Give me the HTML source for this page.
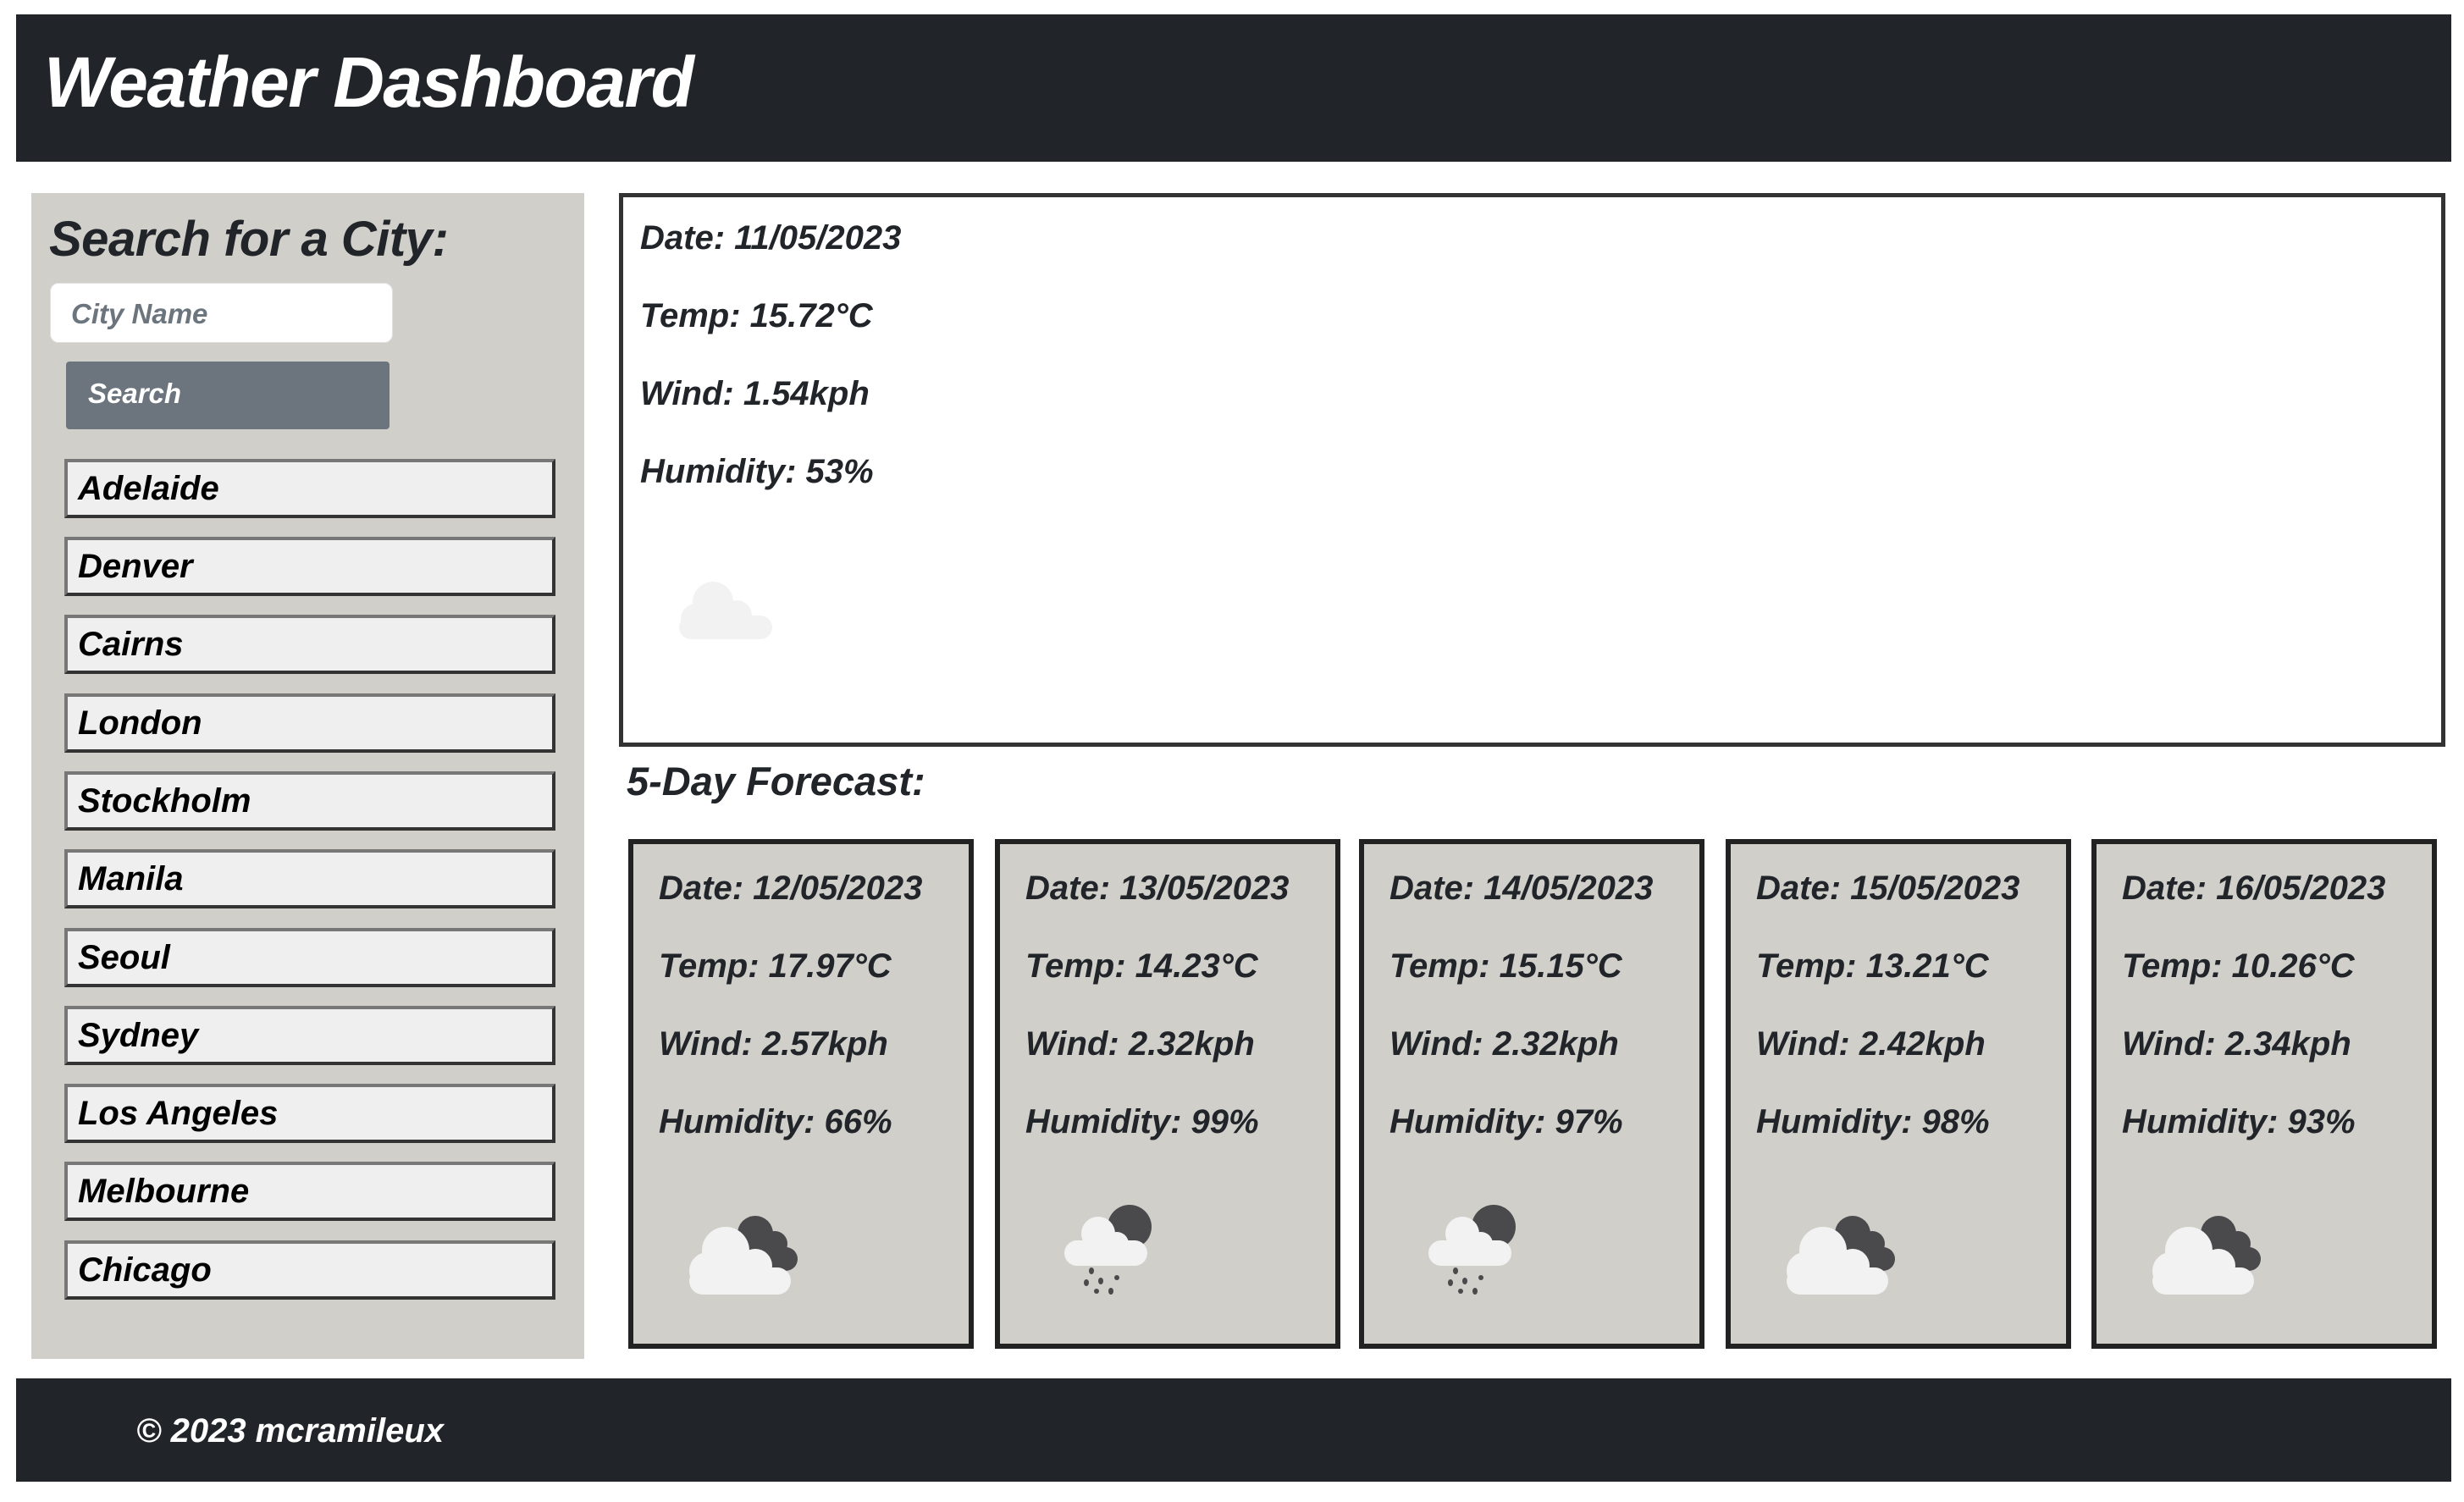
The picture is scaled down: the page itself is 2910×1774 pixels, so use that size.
<!DOCTYPE html>
<html><head><meta charset="utf-8"><style>
*{box-sizing:border-box;margin:0;padding:0}
body{width:2910px;height:1774px;background:#fff;font-family:"Liberation Sans",sans-serif;font-weight:bold;font-style:italic;color:#212529;position:relative;overflow:hidden;letter-spacing:0}
.abs{position:absolute}
header{position:absolute;left:19px;top:17px;width:2876px;height:174px;background:#212529}
header h1{position:absolute;left:33px;top:32px;font-size:84px;color:#fff;letter-spacing:-1.5px}
aside{position:absolute;left:37px;top:228px;width:653px;height:1377px;background:#d0cfca}
aside h2{position:absolute;left:21px;top:21px;font-size:58px;letter-spacing:-0.5px}
.inp{position:absolute;left:22px;top:106px;width:405px;height:71px;background:#fff;border-radius:10px;border:1px solid #e0e0e0;font-size:33px;color:#6c757d;padding:17px 0 0 24px}
.btn{position:absolute;left:41px;top:199px;width:382px;height:80px;background:#6c757d;border-radius:4px;color:#fff;font-size:33px;padding:19px 0 0 26px}
.city{position:absolute;left:39px;width:580px;height:70px;background:#efefef;border:4px solid #333;border-top-color:#777;border-left-color:#777;font-size:40px;color:#000;padding:9px 0 0 12px}
.main{position:absolute;left:731px;top:228px;width:2157px;height:654px;border:5px solid #333}
.t{position:absolute;font-size:40px;letter-spacing:0}
.fc{position:absolute;left:740px;top:895px;font-size:47px;letter-spacing:0}
.card{position:absolute;top:991px;width:408px;height:602px;background:#d0cfca;border:6px solid #222}
.card .t{left:30px}
footer{position:absolute;left:19px;top:1628px;width:2876px;height:122px;background:#212529}
footer span{position:absolute;left:142px;top:40px;color:#fff;font-size:40px;letter-spacing:0}
</style></head><body>
<header><h1>Weather Dashboard</h1></header>
<aside>
<h2>Search for a City:</h2>
<div class="inp">City Name</div>
<div class="btn">Search</div>
<div class="city" style="top:314px">Adelaide</div>
<div class="city" style="top:406px">Denver</div>
<div class="city" style="top:498px">Cairns</div>
<div class="city" style="top:591px">London</div>
<div class="city" style="top:683px">Stockholm</div>
<div class="city" style="top:775px">Manila</div>
<div class="city" style="top:868px">Seoul</div>
<div class="city" style="top:960px">Sydney</div>
<div class="city" style="top:1052px">Los Angeles</div>
<div class="city" style="top:1144px">Melbourne</div>
<div class="city" style="top:1237px">Chicago</div>
</aside>
<div class="main">
<div class="t" style="left:20px;top:26px">Date: 11/05/2023</div>
<div class="t" style="left:20px;top:118px">Temp: 15.72°C</div>
<div class="t" style="left:20px;top:210px">Wind: 1.54kph</div>
<div class="t" style="left:20px;top:302px">Humidity: 53%</div>
<svg class="abs" style="left:56px;top:444px" width="130" height="80" viewBox="0 0 130 80"><g fill="#f2f2f2"><circle cx="50" cy="34" r="24"/><circle cx="30" cy="54" r="18"/><circle cx="78" cy="50" r="18"/><rect x="10" y="50" width="110" height="28" rx="14"/></g></svg>
</div>
<div class="fc">5-Day Forecast:</div>

<div class="card" style="left:742px">
<div class="t" style="top:30px">Date: 12/05/2023</div><div class="t" style="top:122px">Temp: 17.97°C</div><div class="t" style="top:214px">Wind: 2.57kph</div><div class="t" style="top:306px">Humidity: 66%</div>
<svg class="abs" style="left:52px;top:422px" width="160" height="110"><g fill="#4a4a4c"><circle cx="92" cy="38" r="21"/><circle cx="115" cy="50" r="15"/><circle cx="128" cy="68" r="14"/><circle cx="100" cy="70" r="20"/></g><g fill="#f2f2f2"><circle cx="57" cy="58" r="28"/><circle cx="92" cy="76" r="20"/><circle cx="36" cy="82" r="22"/><rect x="14" y="78" width="120" height="32" rx="16"/></g></svg>
</div>
<div class="card" style="left:1175px">
<div class="t" style="top:30px">Date: 13/05/2023</div><div class="t" style="top:122px">Temp: 14.23°C</div><div class="t" style="top:214px">Wind: 2.32kph</div><div class="t" style="top:306px">Humidity: 99%</div>
<svg class="abs" style="left:76px;top:426px" width="120" height="110"><circle cx="77" cy="26" r="26" fill="#4a4a4c"/><g fill="#f2f2f2"><circle cx="40" cy="34" r="20"/><circle cx="62" cy="46" r="14"/><rect x="0" y="42" width="98" height="30" rx="15"/></g><g fill="#4a4a4c"><ellipse cx="32" cy="78" rx="3" ry="4"/><ellipse cx="26" cy="92" rx="3" ry="4"/><ellipse cx="43" cy="90" rx="3" ry="4"/><ellipse cx="62" cy="86" rx="3" ry="3"/><ellipse cx="38" cy="102" rx="3" ry="3"/><ellipse cx="55" cy="102" rx="3" ry="4"/></g></svg>
</div>
<div class="card" style="left:1605px">
<div class="t" style="top:30px">Date: 14/05/2023</div><div class="t" style="top:122px">Temp: 15.15°C</div><div class="t" style="top:214px">Wind: 2.32kph</div><div class="t" style="top:306px">Humidity: 97%</div>
<svg class="abs" style="left:76px;top:426px" width="120" height="110"><circle cx="77" cy="26" r="26" fill="#4a4a4c"/><g fill="#f2f2f2"><circle cx="40" cy="34" r="20"/><circle cx="62" cy="46" r="14"/><rect x="0" y="42" width="98" height="30" rx="15"/></g><g fill="#4a4a4c"><ellipse cx="32" cy="78" rx="3" ry="4"/><ellipse cx="26" cy="92" rx="3" ry="4"/><ellipse cx="43" cy="90" rx="3" ry="4"/><ellipse cx="62" cy="86" rx="3" ry="3"/><ellipse cx="38" cy="102" rx="3" ry="3"/><ellipse cx="55" cy="102" rx="3" ry="4"/></g></svg>
</div>
<div class="card" style="left:2038px">
<div class="t" style="top:30px">Date: 15/05/2023</div><div class="t" style="top:122px">Temp: 13.21°C</div><div class="t" style="top:214px">Wind: 2.42kph</div><div class="t" style="top:306px">Humidity: 98%</div>
<svg class="abs" style="left:52px;top:422px" width="160" height="110"><g fill="#4a4a4c"><circle cx="92" cy="38" r="21"/><circle cx="115" cy="50" r="15"/><circle cx="128" cy="68" r="14"/><circle cx="100" cy="70" r="20"/></g><g fill="#f2f2f2"><circle cx="57" cy="58" r="28"/><circle cx="92" cy="76" r="20"/><circle cx="36" cy="82" r="22"/><rect x="14" y="78" width="120" height="32" rx="16"/></g></svg>
</div>
<div class="card" style="left:2470px">
<div class="t" style="top:30px">Date: 16/05/2023</div><div class="t" style="top:122px">Temp: 10.26°C</div><div class="t" style="top:214px">Wind: 2.34kph</div><div class="t" style="top:306px">Humidity: 93%</div>
<svg class="abs" style="left:52px;top:422px" width="160" height="110"><g fill="#4a4a4c"><circle cx="92" cy="38" r="21"/><circle cx="115" cy="50" r="15"/><circle cx="128" cy="68" r="14"/><circle cx="100" cy="70" r="20"/></g><g fill="#f2f2f2"><circle cx="57" cy="58" r="28"/><circle cx="92" cy="76" r="20"/><circle cx="36" cy="82" r="22"/><rect x="14" y="78" width="120" height="32" rx="16"/></g></svg>
</div>
<footer><span>© 2023 mcramileux</span></footer>
</body></html>
